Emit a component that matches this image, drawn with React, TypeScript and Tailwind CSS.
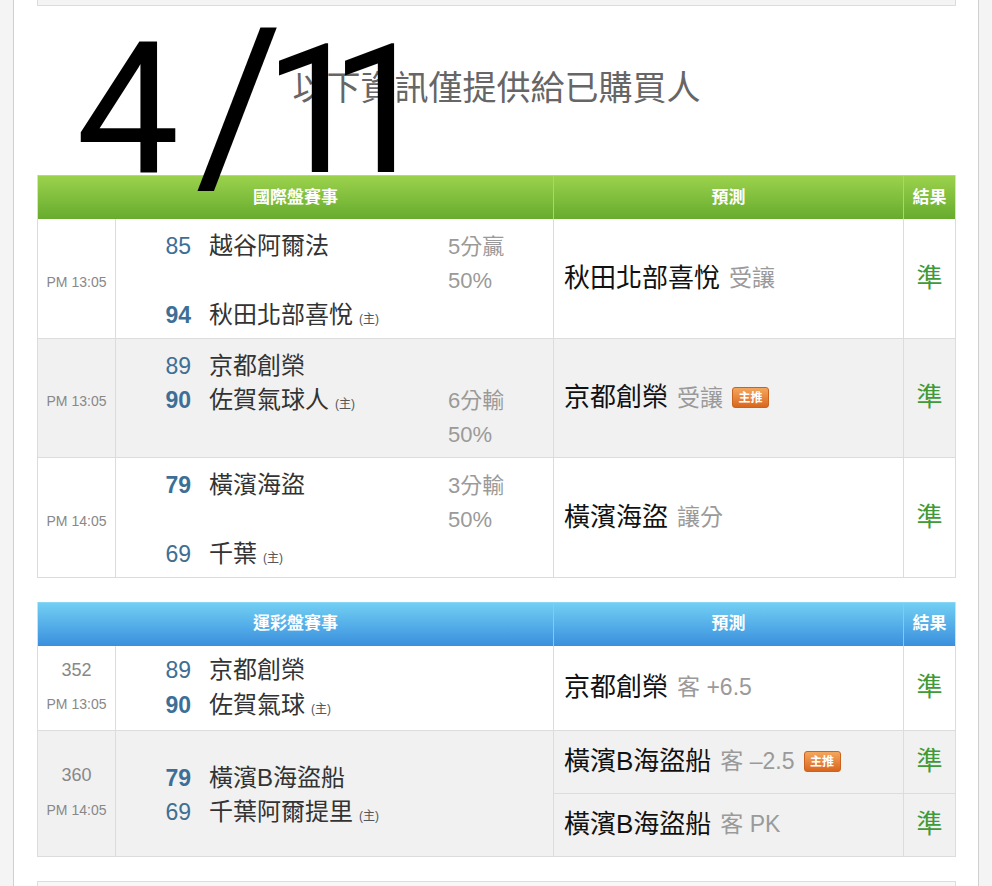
import React from "react";

type Team = { num: string; name: string; bold?: boolean; home?: boolean } | null;

function TeamLine({ t }: { t: Team }) {
  if (!t) return <div className="h-[34.5px]" />;
  return (
    <div className="flex h-[34.5px] items-center whitespace-nowrap">
      <span className={`w-[75px] text-right text-[23px] text-[#3d6f96] ${t.bold ? "font-bold" : ""}`}>{t.num}</span>
      <span className="ml-[18px] text-[24px] text-[#333]">
        {t.name}
        {t.home && <span className="ml-[6px] text-[12px] text-[#555]">(主)</span>}
      </span>
    </div>
  );
}

function ScoreLine({ s }: { s: string | null }) {
  return <div className="flex h-[34.5px] items-center whitespace-nowrap text-[22px] text-[#9a9a9a]">{s}</div>;
}

function Badge() {
  return (
    <span className="ml-[9px] inline-flex h-[21px] w-[37px] items-center justify-center rounded-[3px] border border-[#c9631f] bg-gradient-to-b from-[#f3a75c] to-[#d9661c] text-[12px] font-bold leading-none text-white">
      主推
    </span>
  );
}

function Predict({ name, note, badge }: { name: string; note: string; badge?: boolean }) {
  return (
    <div className="flex items-center whitespace-nowrap pl-[10px]">
      <span className="text-[26px] text-[#111]">{name}</span>
      <span className="ml-[9px] text-[23px] text-[#9a9a9a]">{note}</span>
      {badge && <Badge />}
    </div>
  );
}

function Result() {
  return <span className="text-[26px] text-[#3f9a37]">準</span>;
}

function Header({ title, blue }: { title: string; blue?: boolean }) {
  const bg = blue
    ? "bg-gradient-to-b from-[#72cff3] to-[#3a8fdd] border-t border-[#8ad6f5]"
    : "bg-gradient-to-b from-[#9bd24c] to-[#67ab2e] border-t border-[#b2de6e]";
  const sep = blue ? "border-[#8cc6ef]" : "border-[#a6d872]";
  return (
    <div className={`flex h-[44px] items-center text-[17px] font-bold text-white ${bg}`}>
      <div className={`flex h-full w-[516px] items-center justify-center border-r ${sep}`}>{title}</div>
      <div className={`flex h-full w-[350px] items-center justify-center border-r ${sep}`}>預測</div>
      <div className="flex h-full flex-1 items-center justify-center">結果</div>
    </div>
  );
}

function Row1({
  time,
  teams,
  scores,
  pred,
  gray,
}: {
  time: string;
  teams: Team[];
  scores: (string | null)[];
  pred: React.ReactNode;
  gray?: boolean;
}) {
  return (
    <div className={`flex border-b border-[#dcdcdc] ${gray ? "bg-[#f1f1f1]" : "bg-white"}`}>
      <div className="flex w-[78px] items-center justify-center border-r border-[#dcdcdc] pt-[8px] text-[14px] text-[#888]">{time}</div>
      <div className="flex w-[438px] border-r border-[#dcdcdc] pb-[5px] pt-[10px]">
        <div className="w-[332px]">
          {teams.map((t, i) => (
            <TeamLine key={i} t={t} />
          ))}
        </div>
        <div>
          {scores.map((s, i) => (
            <ScoreLine key={i} s={s} />
          ))}
        </div>
      </div>
      <div className="flex w-[350px] items-center border-r border-[#dcdcdc]">{pred}</div>
      <div className="flex flex-1 items-center justify-center">
        <Result />
      </div>
    </div>
  );
}

export default function App() {
  return (
    <div className="relative min-h-[886px] overflow-hidden bg-[#f4f4f4] font-[Liberation_Sans,Noto_Sans_CJK_TC,sans-serif]">
      <div className="ml-[13px] h-[886px] w-[966px] border-x border-[#d0d0d0] bg-white pl-[23px] pr-[22px]">
        <div className="h-[6px] border-x border-b border-[#dcdcdc] bg-[#f4f4f4]" />
        <div className="flex h-[169px] items-center justify-center pb-[4px] text-[34px] text-[#666]">以下資訊僅提供給已購買人</div>

        <div className="w-[919px] border-x border-[#dcdcdc]">
          <Header title="國際盤賽事" />
          <Row1
            time="PM 13:05"
            teams={[{ num: "85", name: "越谷阿爾法" }, null, { num: "94", name: "秋田北部喜悅", bold: true, home: true }]}
            scores={["5分贏", "50%", null]}
            pred={<Predict name="秋田北部喜悅" note="受讓" />}
          />
          <Row1
            gray
            time="PM 13:05"
            teams={[{ num: "89", name: "京都創榮" }, { num: "90", name: "佐賀氣球人", bold: true, home: true }, null]}
            scores={[null, "6分輸", "50%"]}
            pred={<Predict name="京都創榮" note="受讓" badge />}
          />
          <Row1
            time="PM 14:05"
            teams={[{ num: "79", name: "橫濱海盜", bold: true }, null, { num: "69", name: "千葉", home: true }]}
            scores={["3分輸", "50%", null]}
            pred={<Predict name="橫濱海盜" note="讓分" />}
          />
        </div>

        <div className="mt-[24px] w-[919px] border-x border-[#dcdcdc]">
          <Header title="運彩盤賽事" blue />
          <div className="flex h-[85px] border-b border-[#dcdcdc] bg-white">
            <div className="flex w-[78px] flex-col items-center justify-center border-r border-[#dcdcdc] text-[#888]">
              <div className="flex h-[34.5px] items-center text-[18px]">352</div>
              <div className="flex h-[34.5px] items-center text-[14px]">PM 13:05</div>
            </div>
            <div className="flex w-[438px] flex-col justify-center border-r border-[#dcdcdc]">
              <TeamLine t={{ num: "89", name: "京都創榮" }} />
              <TeamLine t={{ num: "90", name: "佐賀氣球", bold: true, home: true }} />
            </div>
            <div className="flex w-[350px] items-center border-r border-[#dcdcdc]">
              <Predict name="京都創榮" note="客 +6.5" />
            </div>
            <div className="flex flex-1 items-center justify-center">
              <Result />
            </div>
          </div>
          <div className="flex h-[126px] border-b border-[#dcdcdc] bg-[#f1f1f1]">
            <div className="flex w-[78px] flex-col items-center justify-center border-r border-[#dcdcdc] text-[#888]">
              <div className="flex h-[34.5px] items-center text-[18px]">360</div>
              <div className="flex h-[34.5px] items-center text-[14px]">PM 14:05</div>
            </div>
            <div className="flex w-[438px] flex-col justify-center border-r border-[#dcdcdc] pt-[4px]">
              <TeamLine t={{ num: "79", name: "橫濱B海盜船", bold: true }} />
              <TeamLine t={{ num: "69", name: "千葉阿爾提里", home: true }} />
            </div>
            <div className="flex flex-1 flex-col">
              <div className="flex flex-1 border-b border-[#dcdcdc]">
                <div className="flex w-[350px] items-center border-r border-[#dcdcdc]">
                  <Predict name="橫濱B海盜船" note="客 –2.5" badge />
                </div>
                <div className="flex flex-1 items-center justify-center">
                  <Result />
                </div>
              </div>
              <div className="flex flex-1">
                <div className="flex w-[350px] items-center border-r border-[#dcdcdc]">
                  <Predict name="橫濱B海盜船" note="客 PK" />
                </div>
                <div className="flex flex-1 items-center justify-center">
                  <Result />
                </div>
              </div>
            </div>
          </div>
        </div>

        <div className="mt-[24px] h-[40px] w-[919px] border border-[#dcdcdc] bg-[#f7f7f7]" />
      </div>

      <div className="pointer-events-none absolute left-[76px] top-[-6px] flex items-baseline whitespace-nowrap font-[Roboto,sans-serif] leading-none text-black">
        <span className="text-[184px] leading-none">4</span>
        <span className="relative top-[6px] ml-[16px] text-[212px] leading-none">/</span>
        <span className="ml-[-19px] text-[180px] leading-none">1</span>
        <span className="ml-[-35px] text-[180px] leading-none">1</span>
      </div>
    </div>
  );
}
